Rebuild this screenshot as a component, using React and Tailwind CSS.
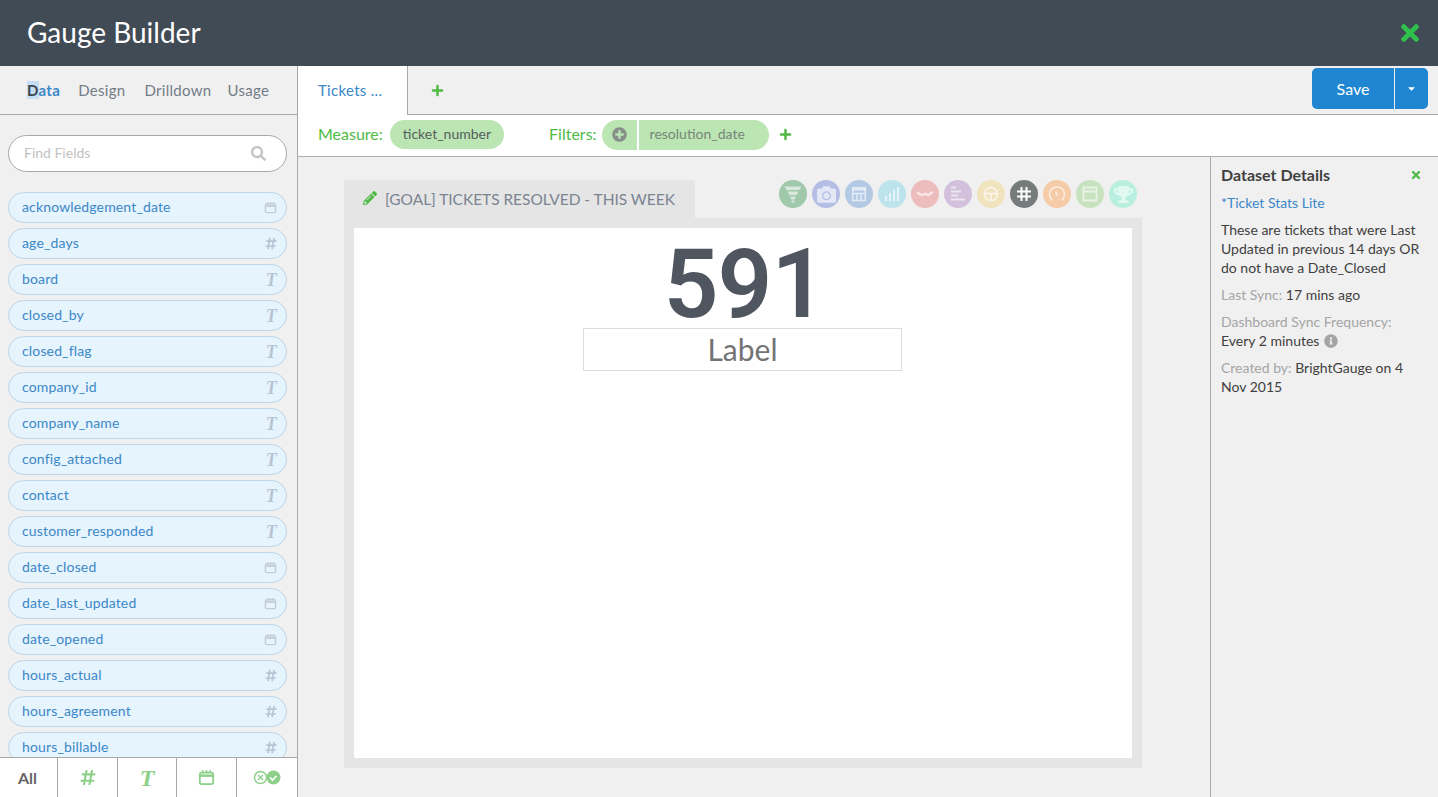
import { FaCamera, FaCaretDown, FaHashtag, FaInfoCircle, FaPencilAlt, FaPlus, FaPlusCircle, FaSearch, FaTimes, FaTrophy } from "react-icons/fa";

const fields = [
    ["acknowledgement_date", "date"],
    ["age_days", "num"],
    ["board", "text"],
    ["closed_by", "text"],
    ["closed_flag", "text"],
    ["company_id", "text"],
    ["company_name", "text"],
    ["config_attached", "text"],
    ["contact", "text"],
    ["customer_responded", "text"],
    ["date_closed", "date"],
    ["date_last_updated", "date"],
    ["date_opened", "date"],
    ["hours_actual", "num"],
    ["hours_agreement", "num"],
    ["hours_billable", "num"],
];

function CalendarIcon({ className }) {
    return (
        <svg viewBox="0 0 14 14" className={className} fill="none" stroke="currentColor" strokeWidth="1.5">
            <rect x="1.5" y="3" width="11" height="9.5" rx="1.5" />
            <path d="M1.5 5.500h11" strokeWidth="2" />
            <path d="M4 1v2.500M7 1v2.500M10 1v2.500" />
        </svg>
    );
}

function FieldRow({ name, type }) {
    return (
        <div className="h-[31px] shrink-0 rounded-full border border-[#bcd5e8] bg-[#e6f4fd] pl-[13px] pr-[9px] flex items-center justify-between text-[14px] tracking-[0.15px] text-[#3a87c8]">
            <span className="pb-[2px]">{name}</span>
            {type === "date" && <CalendarIcon className="w-[13px] h-[13px] text-[#c3ced6]" />}
            {type === "num" && <FaHashtag className="w-[12px] h-[13px] text-[#b6c5d3]" />}
            {type === "text" && <span className="font-['Liberation_Serif',serif] italic font-bold text-[18px] leading-none text-[#b6c5d3]">T</span>}
        </div>
    );
}

// gauge type icons
const typeIcons = [
    {
        bg: "bg-[#a0c8ab]",
        icon: <path d="M1.500 2.500h17l-2.200 3.500H3.700zM4.500 7.500h11L13.500 11h-7zM7.200 12.500h5.600l-1 3H8.200zM8.500 16.500h3V18.500h-3z" fill="currentColor" />,
    },
    { bg: "bg-[#b4bde3]", fa: <FaCamera className="w-[19px] h-[19px] text-[#e4e8f6]" /> },
    {
        bg: "bg-[#b4c9e4]",
        icon: (
            <>
                <path d="M3 3h14v3.500H3z" fill="currentColor" />
                <path d="M3.800 5v11.500h12.400V5M3.800 9.500h12.400M8 9.500v7M12 9.500v7" fill="none" stroke="currentColor" strokeWidth="1.600" />
            </>
        ),
    },
    {
        bg: "bg-[#bde3ec]",
        icon: <path d="M4 17v-5M8 17V9M12 17V6M16 17V3" fill="none" stroke="currentColor" strokeWidth="2" />,
    },
    {
        bg: "bg-[#edbcbc]",
        icon: <path d="M3 9l4 2.300 3.300-1.500 3 1.300L17 8.500" fill="none" stroke="currentColor" strokeWidth="2.600" strokeLinecap="round" strokeLinejoin="round" />,
    },
    {
        bg: "bg-[#d2c0dc]",
        icon: <path d="M3 3.500h5M3 7.500h10M3 11.500h7M3 15.500h14" fill="none" stroke="currentColor" strokeWidth="2" />,
    },
    {
        bg: "bg-[#f0e3bd]",
        icon: <path d="M10 3.500a6.500 6.500 0 1 0 0 13 6.500 6.500 0 0 0 0-13zM3.800 9.500h12.400M10 9.500v6.500" fill="none" stroke="currentColor" strokeWidth="1.800" />,
    },
    {
        bg: "bg-[#767b7b]",
        icon: <path d="M7.500 3v14M12.500 3v14M3 7.500h14M3 12.500h14" fill="none" stroke="#fff" strokeWidth="2" />,
    },
    {
        bg: "bg-[#f5cba8]",
        icon: <path d="M5 16a7.500 7.500 0 1 1 10 0M8.500 7.500l2 4" fill="none" stroke="currentColor" strokeWidth="1.800" />,
    },
    {
        bg: "bg-[#c8e2bf]",
        icon: <path d="M3.500 3.500h13v13h-13zM3.500 7.500h13" fill="none" stroke="currentColor" strokeWidth="1.800" />,
    },
    { bg: "bg-[#b9efdf]", fa: <FaTrophy className="w-[19px] h-[19px] text-[#e2f9f2]" /> },
];

function GreenPlus({ className }) {
    return <FaPlus className={"text-[#4fbb45] " + className} />;
}

export default function App() {
    return (
        <div className="h-screen w-full overflow-hidden flex flex-col bg-[#f0f0f0] font-['Lato','Liberation_Sans',sans-serif]">
            {/* Header */}
            <header className="h-[66px] shrink-0 bg-[#414b56] pl-[27px] pr-[15px] flex items-center justify-between">
                <h1 className="pb-[3px] text-[28px] text-white">Gauge Builder</h1>
                <FaTimes className="w-[26px] h-[26px] text-[#2fc14b]" />
            </header>

            <div className="flex-1 min-h-0 flex">
                {/* Sidebar */}
                <aside className="w-[298px] shrink-0 border-r border-[#a8a8a8] flex flex-col">
                    <nav className="h-[49px] shrink-0 border-b border-[#a8a8a8] pl-[27px] flex items-center gap-[18px] text-[15px] tracking-[0.3px] text-[#737c88]">
                        <span className="text-[#3a87c8] font-bold">
                            <span className="bg-[#c5def5] text-[#3c4650]">D</span>ata
                        </span>
                        <span>Design</span>
                        <span className="ml-[1px]">Drilldown</span>
                        <span className="-ml-[2px]">Usage</span>
                    </nav>
                    <div className="flex-1 min-h-0 overflow-hidden pl-[8px] pr-[10px] pt-[20px]">
                        <div className="h-[37px] rounded-full border border-[#a8a8a8] bg-white pl-[15px] pr-[20px] flex items-center justify-between text-[14px] text-[#c2c2c2]">
                            <span className="pb-[3px]">Find Fields</span>
                            <FaSearch className="w-[15px] h-[15px] text-[#c4c4c4]" />
                        </div>
                        <div className="mt-[20px] flex flex-col gap-[5px]">
                            {fields.map(([name, type]) => (
                                <FieldRow key={name} name={name} type={type} />
                            ))}
                        </div>
                    </div>
                    <div className="h-[40px] shrink-0 border-t border-[#a8a8a8] bg-white grid grid-cols-[58px_60px_59px_60px_1fr] divide-x divide-[#a8a8a8]">
                        <div className="pr-[2px] flex items-center justify-center text-[16px] font-bold text-[#666]">All</div>
                        <div className="flex items-center justify-center">
                            <FaHashtag className="w-[16px] h-[17px] text-[#8ed08a]" />
                        </div>
                        <div className="flex items-center justify-center font-['Liberation_Serif',serif] italic font-bold text-[24px] leading-none text-[#8ed08a]">T</div>
                        <div className="flex items-center justify-center">
                            <CalendarIcon className="w-[17px] h-[17px] text-[#8ed08a]" />
                        </div>
                        <div className="flex items-center justify-center">
                            <svg viewBox="0 0 28 15" className="w-[28px] h-[15px]">
                                <circle cx="7.500" cy="7.500" r="6" fill="none" stroke="#8ed08a" strokeWidth="1.500" />
                                <path d="M5 5l5 5M10 5l-5 5" stroke="#8ed08a" strokeWidth="1.300" />
                                <circle cx="20.500" cy="7.500" r="7" fill="#8ed08a" />
                                <path d="M17 7.500l2.500 2.500 4-4" fill="none" stroke="#fff" strokeWidth="1.600" />
                            </svg>
                        </div>
                    </div>
                </aside>

                {/* Main */}
                <main className="flex-1 min-w-0 flex flex-col">
                    <div className="h-[49px] shrink-0 flex">
                        <div className="w-[110px] bg-white border-r border-[#a8a8a8] pl-[20px] flex items-center text-[15px] tracking-[0.3px] text-[#3a87c8]">Tickets ...</div>
                        <div className="flex-1 border-b border-[#a8a8a8] pl-[23px] pr-[10px] flex items-center justify-between">
                            <GreenPlus className="w-[13px] h-[13px]" />
                            <div className="h-[41px] mb-[3px] flex text-white">
                                <div className="w-[82px] rounded-l-[5px] bg-[#2086d2] flex items-center justify-center text-[16px]">Save</div>
                                <div className="w-[33px] ml-[1px] rounded-r-[5px] bg-[#2086d2] flex items-center justify-center">
                                    <FaCaretDown className="w-[11px] h-[11px]" />
                                </div>
                            </div>
                        </div>
                    </div>
                    <div className="h-[42px] shrink-0 bg-white border-b border-[#b0b0b0] pl-[20px] pb-[2px] flex items-center text-[16px] text-[#4fbb45]">
                        <span className="pb-[2px]">Measure:</span>
                        <div className="ml-[7px] h-[29px] pb-[2px] px-[13px] rounded-full bg-[#bbe5b3] flex items-center text-[14px] text-[#555e5c]">ticket_number</div>
                        <span className="ml-[45px] pb-[2px]">Filters:</span>
                        <div className="ml-[5px] w-[35px] h-[30px] rounded-l-full rounded-r-[2px] bg-[#bbe5b3] flex items-center justify-center">
                            <FaPlusCircle className="w-[15px] h-[15px] text-[#878f88]" />
                        </div>
                        <div className="ml-[2px] w-[130px] h-[30px] pb-[2px] rounded-r-full bg-[#bbe5b3] pl-[11px] flex items-center text-[14px] text-[#78857a]">resolution_date</div>
                        <GreenPlus className="ml-[10px] w-[13px] h-[13px]" />
                    </div>
                    <div className="flex-1 min-h-0 flex">
                        {/* Gauge canvas */}
                        <section className="flex-1 min-w-0 pl-[46px] pr-[68px] pt-[23px]">
                            <div className="flex items-start justify-between pr-[5px]">
                                <div className="h-[38px] w-[351px] rounded-t-[3px] bg-[#e5e5e5] pl-[19px] pt-[1px] flex items-center gap-[8px] text-[15.5px] tracking-[-0.04px] text-[#7b8491]">
                                    <FaPencilAlt className="w-[14px] h-[14px] mb-[3px] text-[#4fbb45]" />
                                    <span>[GOAL] TICKETS RESOLVED - THIS WEEK</span>
                                </div>
                                <div className="flex gap-[5px]">
                                    {typeIcons.map((t, i) => (
                                        <div key={i} className={"w-[28px] h-[28px] rounded-full flex items-center justify-center text-[#fff]/60 " + t.bg}>
                                            {t.fa || (
                                                <svg viewBox="0 0 20 20" className="w-[20px] h-[20px]">
                                                    {t.icon}
                                                </svg>
                                            )}
                                        </div>
                                    ))}
                                </div>
                            </div>
                            <div className="h-[550px] bg-[#e5e5e5] p-[10px]">
                                <div className="h-full bg-white flex flex-col items-center pt-[13px]">
                                    <div className="pl-[3px] font-['Roboto',sans-serif] text-[96px] leading-[87px] tracking-[-1px] font-semibold text-[#50565f]">591</div>
                                    <div className="w-[319px] h-[43px] mr-[1px] border border-[#dcdcdc] flex items-center justify-center text-[30px] text-[#737373]">Label</div>
                                </div>
                            </div>
                        </section>

                        {/* Dataset details */}
                        <aside className="w-[228px] shrink-0 border-l border-[#a8a8a8] pl-[10px] pr-[12px] pt-[8px] text-[14px] leading-[19px] text-[#3f3f3f]">
                            <div className="flex items-center justify-between pr-[4px]">
                                <h2 className="text-[16px] font-bold">Dataset Details</h2>
                                <FaTimes className="w-[12px] h-[12px] text-[#4fbb45]" />
                            </div>
                            <div className="mt-[9px] text-[#3a87c8]">*Ticket Stats Lite</div>
                            <p className="mt-[8px]">These are tickets that were Last Updated in previous 14 days OR do not have a Date_Closed</p>
                            <p className="mt-[8px]"><span className="text-[#a5a5a5]">Last Sync:</span> 17 mins ago</p>
                            <p className="mt-[8px]">
                                <span className="text-[#a5a5a5]">Dashboard Sync Frequency:</span>
                                <br />
                                Every 2 minutes <FaInfoCircle className="inline w-[14px] h-[14px] mb-[2px] ml-[1px] text-[#a5a5a5]" />
                            </p>
                            <p className="mt-[8px]"><span className="text-[#a5a5a5]">Created by:</span> BrightGauge on 4 Nov 2015</p>
                        </aside>
                    </div>
                </main>
            </div>
        </div>
    );
}
